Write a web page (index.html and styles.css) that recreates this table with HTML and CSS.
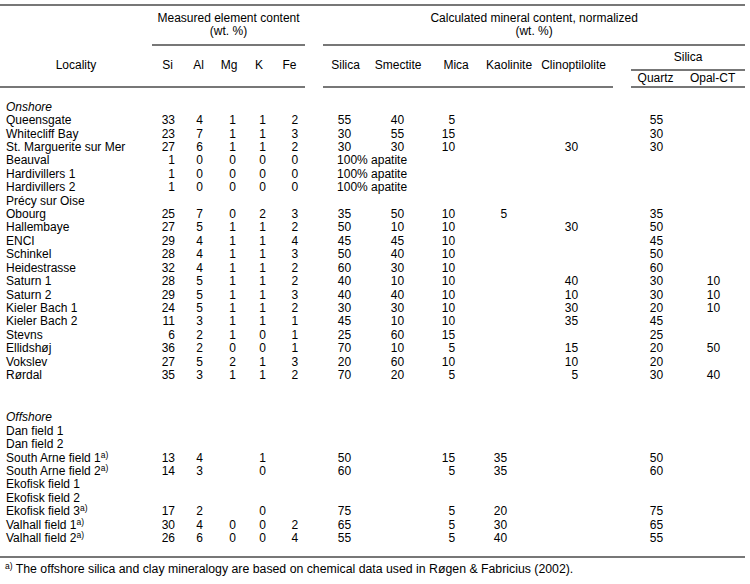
FILE: index.html
```html
<!DOCTYPE html>
<html>
<head>
<meta charset="utf-8">
<link rel="stylesheet" href="styles.css">
</head>
<body>
<table class="tbl">
<colgroup>
<col class="w-loc"><col class="w-31"><col class="w-31"><col class="w-30"><col class="w-30"><col class="w-31"><col class="w-gap">
<col class="w-45"><col class="w-60"><col class="w-56"><col class="w-50"><col class="w-79"><col class="w-gap"><col class="w-49"><col class="w-65">
</colgroup>
<thead>
<tr class="hr1">
<th class="top"></th>
<th class="top rule" colspan="5">Measured element content<br>(wt. %)</th>
<th class="top"></th>
<th class="top rule" colspan="8">Calculated mineral content, normalized<br>(wt. %)</th>
</tr>
<tr class="hr2">
<th class="rule" rowspan="2">Locality</th>
<th class="rule" rowspan="2">Si</th>
<th class="rule" rowspan="2">Al</th>
<th class="rule" rowspan="2">Mg</th>
<th class="rule" rowspan="2">K</th>
<th class="rule" rowspan="2">Fe</th>
<th rowspan="2"></th>
<th class="rule" rowspan="2">Silica</th>
<th class="rule" rowspan="2">Smectite</th>
<th class="rule" rowspan="2">Mica</th>
<th class="rule" rowspan="2">Kaolinite</th>
<th class="rule" rowspan="2">Clinoptilolite</th>
<th rowspan="2"></th>
<th class="rule" colspan="2">Silica</th>
</tr>
<tr class="hr3">
<th class="rule">Quartz</th>
<th class="rule">Opal-CT</th>
</tr>
</thead>
<tbody>
<tr class="first sec"><td>Onshore</td></tr>
<tr><td>Queensgate</td><td>33</td><td>4</td><td>1</td><td>1</td><td>2</td><td></td><td>55</td><td>40</td><td>5</td><td></td><td></td><td></td><td>55</td><td></td></tr>
<tr><td>Whitecliff Bay</td><td>23</td><td>7</td><td>1</td><td>1</td><td>3</td><td></td><td>30</td><td>55</td><td>15</td><td></td><td></td><td></td><td>30</td><td></td></tr>
<tr><td>St. Marguerite sur Mer</td><td>27</td><td>6</td><td>1</td><td>1</td><td>2</td><td></td><td>30</td><td>30</td><td>10</td><td></td><td>30</td><td></td><td>30</td><td></td></tr>
<tr><td>Beauval</td><td>1</td><td>0</td><td>0</td><td>0</td><td>0</td><td></td><td class="ap">100% apatite</td></tr>
<tr><td>Hardivillers 1</td><td>1</td><td>0</td><td>0</td><td>0</td><td>0</td><td></td><td class="ap">100% apatite</td></tr>
<tr><td>Hardivillers 2</td><td>1</td><td>0</td><td>0</td><td>0</td><td>0</td><td></td><td class="ap">100% apatite</td></tr>
<tr><td>Précy sur Oise</td></tr>
<tr><td>Obourg</td><td>25</td><td>7</td><td>0</td><td>2</td><td>3</td><td></td><td>35</td><td>50</td><td>10</td><td>5</td><td></td><td></td><td>35</td><td></td></tr>
<tr><td>Hallembaye</td><td>27</td><td>5</td><td>1</td><td>1</td><td>2</td><td></td><td>50</td><td>10</td><td>10</td><td></td><td>30</td><td></td><td>50</td><td></td></tr>
<tr><td>ENCI</td><td>29</td><td>4</td><td>1</td><td>1</td><td>4</td><td></td><td>45</td><td>45</td><td>10</td><td></td><td></td><td></td><td>45</td><td></td></tr>
<tr><td>Schinkel</td><td>28</td><td>4</td><td>1</td><td>1</td><td>3</td><td></td><td>50</td><td>40</td><td>10</td><td></td><td></td><td></td><td>50</td><td></td></tr>
<tr><td>Heidestrasse</td><td>32</td><td>4</td><td>1</td><td>1</td><td>2</td><td></td><td>60</td><td>30</td><td>10</td><td></td><td></td><td></td><td>60</td><td></td></tr>
<tr><td>Saturn 1</td><td>28</td><td>5</td><td>1</td><td>1</td><td>2</td><td></td><td>40</td><td>10</td><td>10</td><td></td><td>40</td><td></td><td>30</td><td>10</td></tr>
<tr><td>Saturn 2</td><td>29</td><td>5</td><td>1</td><td>1</td><td>3</td><td></td><td>40</td><td>40</td><td>10</td><td></td><td>10</td><td></td><td>30</td><td>10</td></tr>
<tr><td>Kieler Bach 1</td><td>24</td><td>5</td><td>1</td><td>1</td><td>2</td><td></td><td>30</td><td>30</td><td>10</td><td></td><td>30</td><td></td><td>20</td><td>10</td></tr>
<tr><td>Kieler Bach 2</td><td>11</td><td>3</td><td>1</td><td>1</td><td>1</td><td></td><td>45</td><td>10</td><td>10</td><td></td><td>35</td><td></td><td>45</td><td></td></tr>
<tr><td>Stevns</td><td>6</td><td>2</td><td>1</td><td>0</td><td>1</td><td></td><td>25</td><td>60</td><td>15</td><td></td><td></td><td></td><td>25</td><td></td></tr>
<tr><td>Ellidshøj</td><td>36</td><td>2</td><td>0</td><td>0</td><td>1</td><td></td><td>70</td><td>10</td><td>5</td><td></td><td>15</td><td></td><td>20</td><td>50</td></tr>
<tr><td>Vokslev</td><td>27</td><td>5</td><td>2</td><td>1</td><td>3</td><td></td><td>20</td><td>60</td><td>10</td><td></td><td>10</td><td></td><td>20</td><td></td></tr>
<tr><td>Rørdal</td><td>35</td><td>3</td><td>1</td><td>1</td><td>2</td><td></td><td>70</td><td>20</td><td>5</td><td></td><td>5</td><td></td><td>30</td><td>40</td></tr>
<tr class="gap sec"><td>Offshore</td></tr>
<tr><td>Dan field 1</td></tr>
<tr><td>Dan field 2</td></tr>
<tr><td>South Arne field 1<span class="sup">a)</span></td><td>13</td><td>4</td><td></td><td>1</td><td></td><td></td><td>50</td><td></td><td>15</td><td>35</td><td></td><td></td><td>50</td><td></td></tr>
<tr><td>South Arne field 2<span class="sup">a)</span></td><td>14</td><td>3</td><td></td><td>0</td><td></td><td></td><td>60</td><td></td><td>5</td><td>35</td><td></td><td></td><td>60</td><td></td></tr>
<tr><td>Ekofisk field 1</td></tr>
<tr><td>Ekofisk field 2</td></tr>
<tr><td>Ekofisk field 3<span class="sup">a)</span></td><td>17</td><td>2</td><td></td><td>0</td><td></td><td></td><td>75</td><td></td><td>5</td><td>20</td><td></td><td></td><td>75</td><td></td></tr>
<tr><td>Valhall field 1<span class="sup">a)</span></td><td>30</td><td>4</td><td>0</td><td>0</td><td>2</td><td></td><td>65</td><td></td><td>5</td><td>30</td><td></td><td></td><td>65</td><td></td></tr>
<tr class="last"><td>Valhall field 2<span class="sup">a)</span></td><td>26</td><td>6</td><td>0</td><td>0</td><td>4</td><td></td><td>55</td><td></td><td>5</td><td>40</td><td></td><td></td><td>55</td><td></td></tr>
</tbody>
</table>
<p class="note"><span class="sup">a)</span> The offshore silica and clay mineralogy are based on chemical data used in Røgen &amp; Fabricius (2002).</p>
</body>
</html>
```

FILE: styles.css
```css
html, body {
  margin: 0;
  padding: 0;
  background: #ffffff;
}

body {
  font-family: "Liberation Sans", Arial, sans-serif;
  font-size: 12px;
  color: #000000;
  width: 750px;
}

.tbl {
  border-collapse: collapse;
  table-layout: fixed;
  width: 745px;
  margin-top: 4px;
  line-height: 13.4px;
}

.w-loc { width: 152px; }
.w-31 { width: 31px; }
.w-30 { width: 30px; }
.w-gap { width: 18px; }
.w-45 { width: 45px; }
.w-60 { width: 60px; }
.w-56 { width: 56px; }
.w-50 { width: 50px; }
.w-79 { width: 79px; }
.w-49 { width: 49px; }
.w-65 { width: 65px; }

.tbl th,
.tbl td {
  padding: 0;
  font-weight: normal;
  white-space: nowrap;
  vertical-align: middle;
}

.tbl th {
  text-align: center;
}

.tbl .top {
  border-top: 2px solid #777;
}

.tbl .rule {
  border-bottom: 2px solid #777;
}

.hr1 th {
  padding: 5.5px 0 5.5px;
}

.hr2 th[colspan] {
  height: 23px;
  padding: 0;
}

.hr3 th {
  height: 15px;
  padding: 0;
}

.tbl td {
  text-align: right;
}

.tbl td:nth-child(1) { text-align: left; padding-left: 6px; }
.tbl td:nth-child(2) { padding-right: 8px; }
.tbl td:nth-child(3) { padding-right: 11px; }
.tbl td:nth-child(4) { padding-right: 8px; }
.tbl td:nth-child(5) { padding-right: 8px; }
.tbl td:nth-child(6) { padding-right: 7px; }
.tbl td:nth-child(8) { padding-right: 17px; }
.tbl td:nth-child(9) { padding-right: 24px; }
.tbl td:nth-child(10) { padding-right: 29px; }
.tbl td:nth-child(11) { padding-right: 27px; }
.tbl td:nth-child(12) { padding-right: 35px; }
.tbl td:nth-child(14) { padding-right: 17px; }
.tbl td:nth-child(15) { padding-right: 25px; }

.tbl td.ap {
  text-align: left;
  padding: 0 0 0 14px;
  overflow: visible;
}

.sec td {
  font-style: italic;
}

.first td {
  padding-top: 13px;
}

.gap td {
  padding-top: 29px;
}

.last td {
  padding-bottom: 11px;
}

.sup {
  font-size: 8.5px;
  line-height: 0;
  vertical-align: 4px;
}

.note {
  width: 745px;
  margin: 0;
  border-top: 2px solid #777;
  padding: 5px 0 0 5px;
  box-sizing: border-box;
  font-size: 12.3px;
  line-height: 13.4px;
}
```
